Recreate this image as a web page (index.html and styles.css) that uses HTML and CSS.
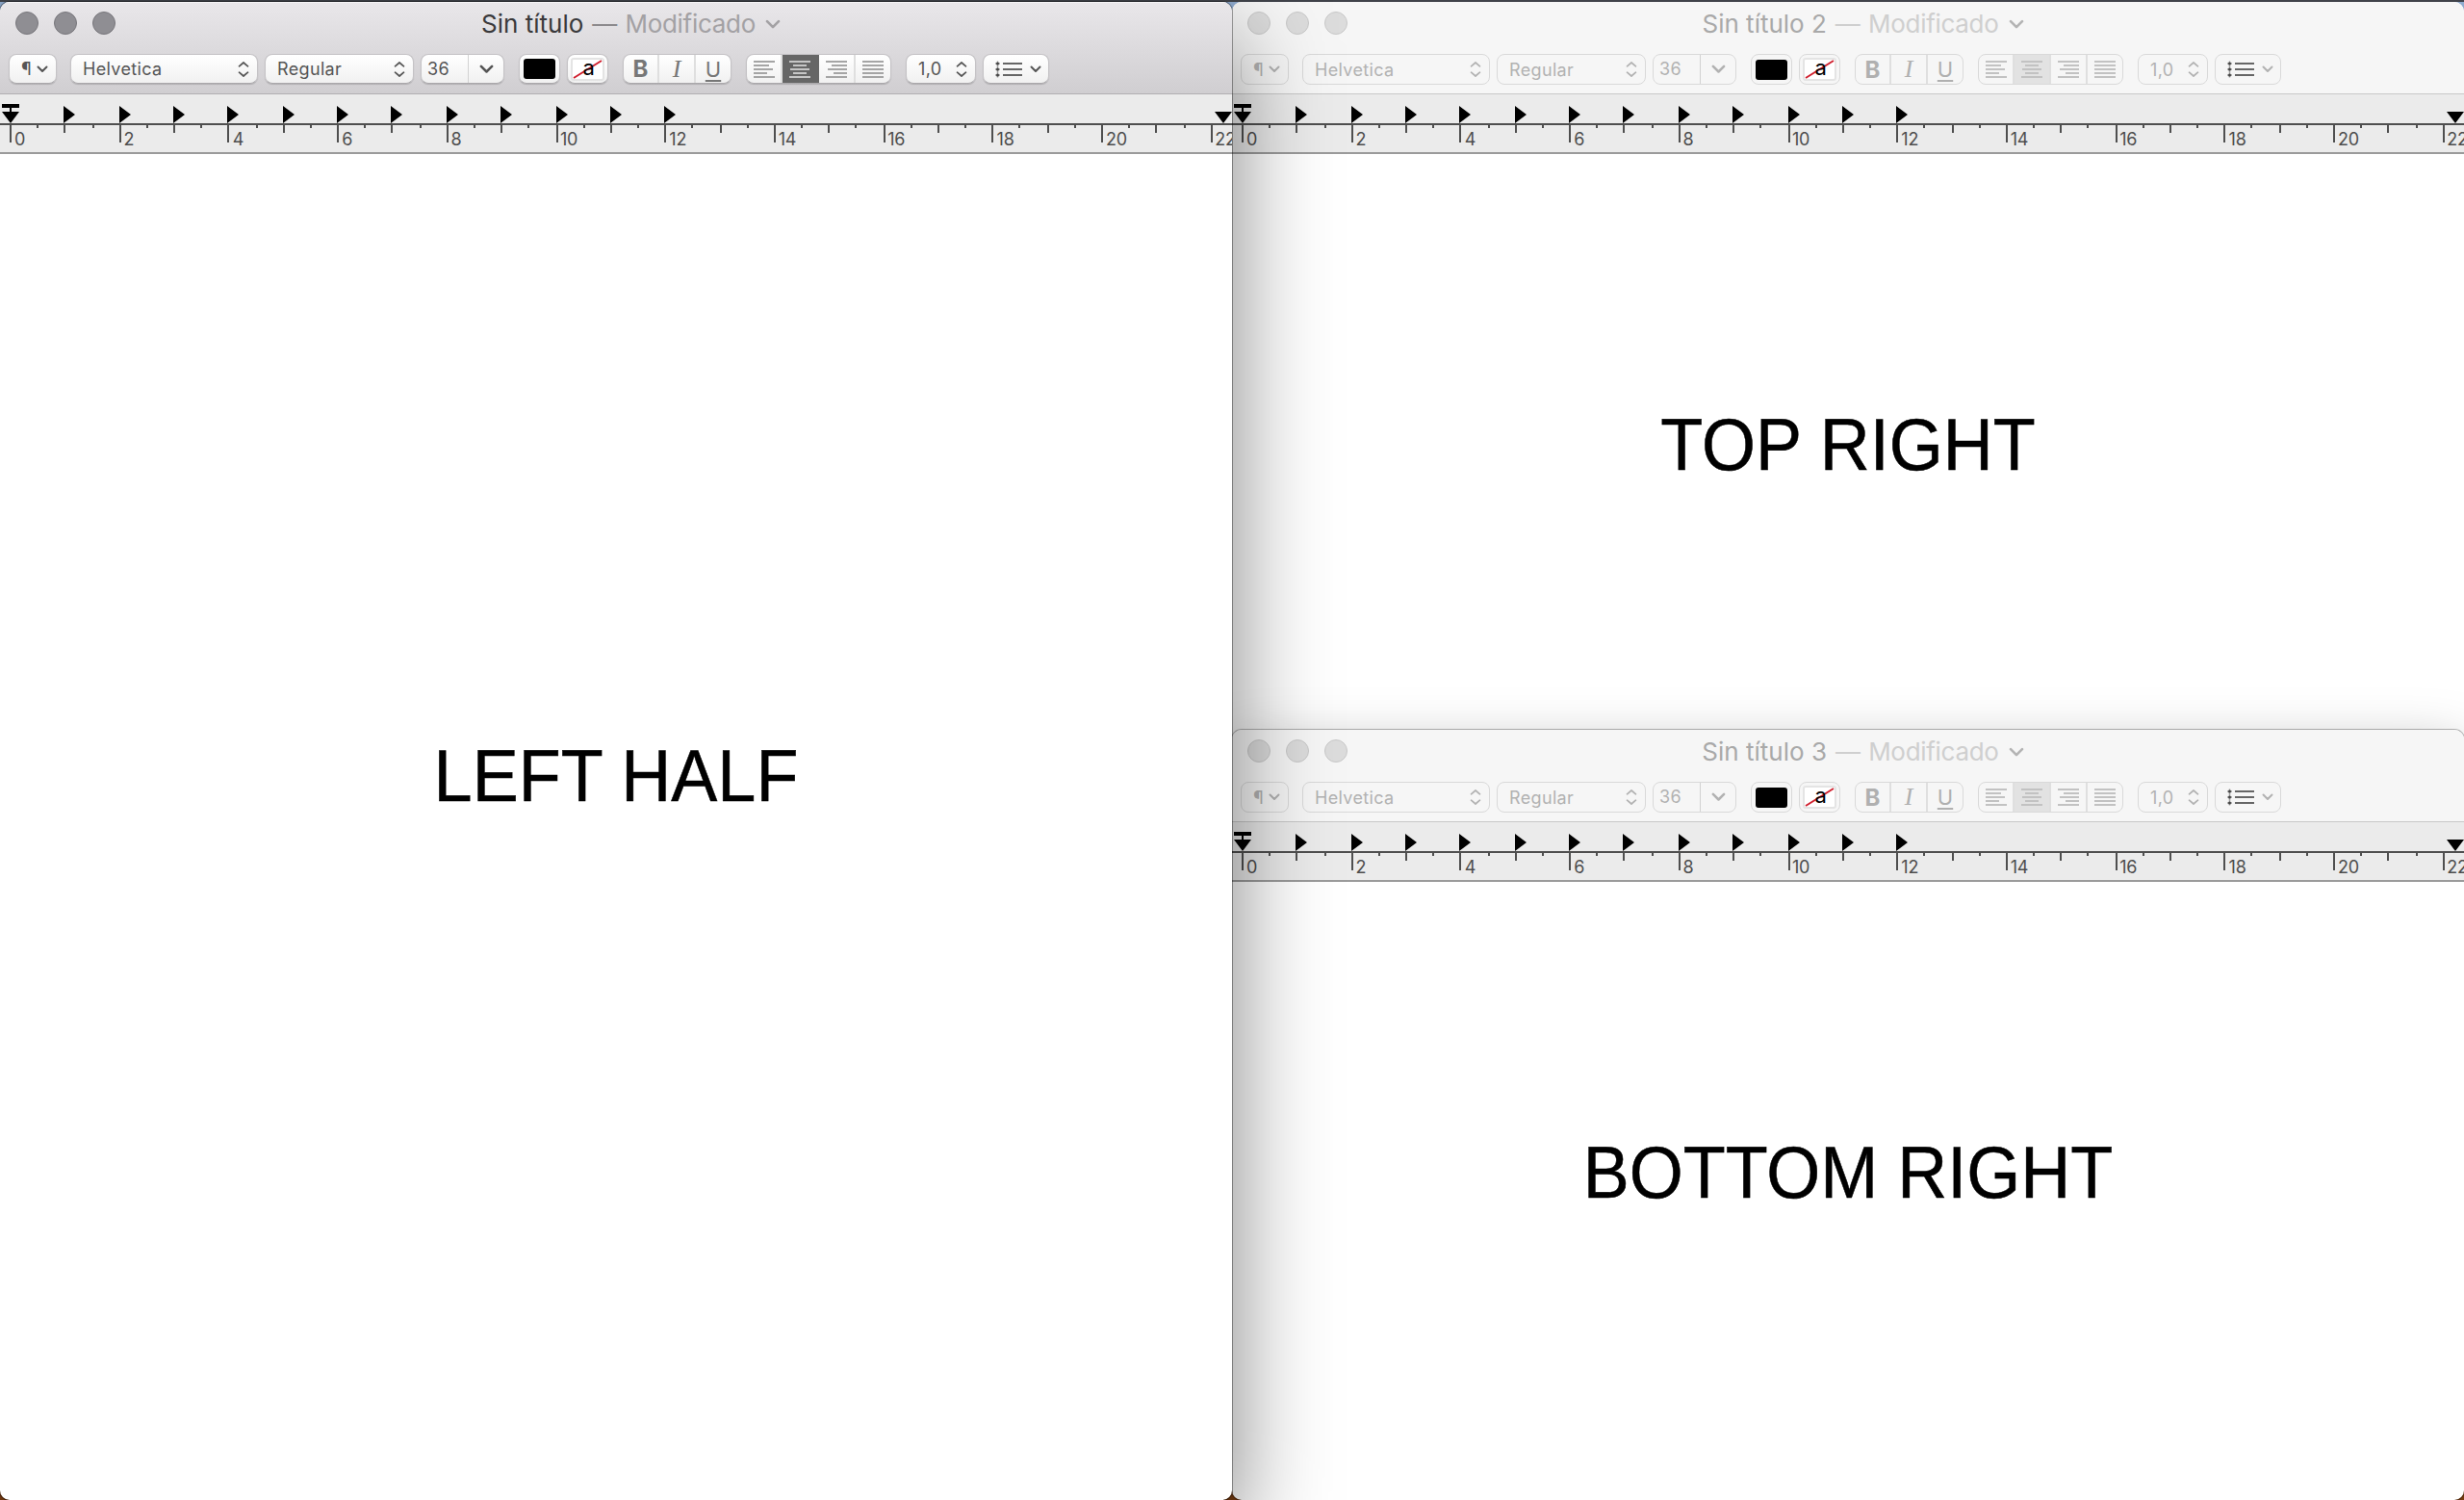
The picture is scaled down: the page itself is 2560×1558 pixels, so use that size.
FILE: index.html
```
<!DOCTYPE html>
<html lang="es">
<head>
<meta charset="utf-8">
<title>Sin título</title>
<link rel="stylesheet" href="styles.css">
</head>
<body>
<svg class="defs" width="0" height="0" aria-hidden="true">
  <symbol id="down" viewBox="0 0 12 8"><path d="M1.5 1.5 6 6l4.500-4.500" fill="none" stroke="currentColor" stroke-width="2" stroke-linecap="round" stroke-linejoin="round"/></symbol>
  <symbol id="updown" viewBox="0 0 12 18"><path d="M1.500 5.800 6 2l4.500 3.800M1.500 12.200 6 16l4.500-3.800" fill="none" stroke="currentColor" stroke-width="1.700" stroke-linecap="round" stroke-linejoin="round"/></symbol>
  <symbol id="left" viewBox="0 0 22 18"><path d="M0 1h22M0 5h16M0 9h20M0 13h14M0 17h22" stroke="currentColor" stroke-width="2"/></symbol>
  <symbol id="center" viewBox="0 0 22 18"><path d="M0 1h22M4 5h14M1 9h20M4 13h14M0 17h22" stroke="currentColor" stroke-width="2"/></symbol>
  <symbol id="right" viewBox="0 0 22 18"><path d="M0 1h22M6 5h16M2 9h20M8 13h14M0 17h22" stroke="currentColor" stroke-width="2"/></symbol>
  <symbol id="full" viewBox="0 0 22 18"><path d="M0 1h22M0 5h22M0 9h22M0 13h22M0 17h22" stroke="currentColor" stroke-width="2"/></symbol>
  <symbol id="list" viewBox="0 0 28 18"><path d="M8 3h20M8 9h20M8 15h20" stroke="currentColor" stroke-width="2"/><path d="M0 3h5M0 9h5M0 15h5M2.500 .5v17" stroke="currentColor" stroke-width="1.500" opacity=".6"/><circle cx="2.500" cy="3" r="1.500"/><circle cx="2.500" cy="9" r="1.500"/><circle cx="2.500" cy="15" r="1.500"/></symbol>
</svg>
<main id="desktop"></main>
<script src="windows.js"></script>
</body>
</html>
```
FILE: styles.css
```
* { box-sizing: border-box; }
body { margin: 0; background: #40434a; font-family: Inter, "Liberation Sans", sans-serif; overflow: hidden; }
svg { display: block; flex: none; }
.defs { position: absolute; }
#desktop { display: grid; grid-template-columns: 1280px 1280px; grid-template-rows: 756px 800px; width: 2560px; height: 1558px; padding-top: 2px; overflow: hidden; background: linear-gradient(#40434a 2px, #8fabcf 2px, #7f9dc4 60px, #6a3c18 1500px, #8a4513 1558px); }
.window { display: flex; flex-direction: column; background: #fff; overflow: hidden; border-radius: 10px; position: relative; }
.active { grid-row: 1 / 3; z-index: 3; box-shadow: 0 0 0 1px rgba(0,0,0,.35), 0 40px 100px rgba(0,0,0,.5); }
.top { z-index: 1; height: 780px; }
.bottom { z-index: 2; box-shadow: 0 0 0 1px rgba(0,0,0,.28), 0 22px 60px rgba(0,0,0,.35); }
.head { height: 96px; background: #f6f6f6; border-bottom: 1px solid #c8c8c8; flex: none; }
.active .head { background: linear-gradient(#e9e7ea, #d0ced1); border-color: #b1afb2; box-shadow: inset 0 1px #f5f4f6; }
.titlebar { height: 54px; padding: 10px 16px 0; display: grid; grid-template-columns: 112px 1fr 112px; }
.lights { display: flex; gap: 16px; }
.lights i { width: 24px; height: 24px; border-radius: 50%; background: #dcdcdc; border: 1px solid #c8c8c8; }
.active .lights i { background: #8f8e93; border-color: #77767b; }
.title { display: flex; justify-content: center; align-items: center; height: 26px; padding-left: 31px; font-size: 26px; line-height: 26px; color: #a9a9a9; white-space: pre; }
.title span { color: #cfcfcf; letter-spacing: -.3px; }
.title .dash { margin: 0 1.5px 0 2px; }
.title svg { margin-left: 10px; color: #b4b4b4; }
.active .title { color: #3a393b; }
.active .title span { color: #a3a1a4; }
.active .title .dash { color: #8c8a8d; }
.active .title svg { color: #a3a1a4; }
.tools { display: flex; height: 32px; padding-left: 9px; font-size: 18px; letter-spacing: .35px; color: #b2b2b2; }
.box { height: 32px; border: 1px solid #d9d9d9; border-radius: 8px; display: flex; align-items: center; overflow: hidden; background: #f6f6f6; flex: none; }
.active .box { height: 31px; background: linear-gradient(#fff, #f1f1f1); border-color: #c5c3c6; border-bottom-color: #aaa8ab; box-shadow: 0 1px 1px rgba(0,0,0,.16); }
.active .tools { color: #555; }
.para { width: 50px; padding: 0 8px 0 12px; justify-content: space-between; margin-right: 14px; font-size: 18px; }
.family { width: 195px; padding: 0 8px 0 12px; justify-content: space-between; margin-right: 7px; }
.face { width: 155px; padding: 0 8px 0 12px; justify-content: space-between; margin-right: 7px; }
.size { width: 87px; margin-right: 15px; }
.size b { font-weight: 400; width: 49px; padding-left: 6px; border-right: 1px solid #d2d2d2; line-height: 32px; }
.size svg { margin-left: 11px; }
.ink { width: 43px; margin-right: 7px; justify-content: center; }
.ink i { width: 33px; height: 21px; border-radius: 3px; background: #000; }
.mark { width: 43px; margin-right: 15px; justify-content: center; overflow: visible; }
.mark svg { overflow: visible; }
.mark svg text { font: 22px Inter, sans-serif; letter-spacing: 0; }
.style, .align { margin-right: 15px; }
.style b, .align b { width: 38px; height: 100%; border-right: 2px solid #dfdfdf; display: flex; align-items: center; justify-content: center; font-weight: 400; font-size: 24px; letter-spacing: 0; color: #b0b0b0; }
.style b:first-child, .align b:first-child { width: 37px; }
.style b:last-child, .align b:last-child { border: 0; width: 36px; }
.active .style b { color: #777; }
.style .bold { font-weight: 700; }
.style .italic { font-family: "Liberation Serif", serif; font-style: italic; font-size: 26px; }
.style .under { font-size: 22px; text-decoration: underline; text-decoration-thickness: 2px; text-underline-offset: 3px; }
.align b { color: #c2c2c2; }
.active .align b { color: #a5a5a5; }
.align .on { background: #e2e2e2; }
.active .align .on { background: #666; color: #c6c6c6; border-color: #666; }
.spacing { width: 73px; padding: 0 8px 0 12px; justify-content: space-between; margin-right: 7px; }
.list { width: 69px; padding: 0 7px 0 12px; justify-content: space-between; }
.list svg:first-child { color: #666; fill: #444; }
.ruler { height: 62px; background: #ebebeb; border-bottom: 2px solid #9b9b9b; flex: none; position: relative; }
.ruler > svg { position: absolute; left: 0; top: 0; }
.labels { display: flex; padding: 38px 0 0 15px; font-size: 18px; line-height: 18px; color: #4d4d4d; letter-spacing: -.2px; }
.labels span { width: 113.4px; flex: none; }
.page { flex: 1; display: flex; justify-content: center; align-items: flex-start; font: 72px/84px "Liberation Sans", Arial, sans-serif; color: #000; }
/* Slightly taller capitals and firmer stems, keeping the baseline */
.page p { margin: 0; transform: scaleY(1.05); transform-origin: 0 67px; -webkit-text-stroke: .5px #000; }
.active .page { padding-top: 605px; }
.top .page, .bottom .page { padding-top: 261px; }
```
FILE: windows.js
```
const icon = (id, w, h) => `<svg width="${w}" height="${h}"><use href="#${id}"/></svg>`;

// One centimetre is 28.35 points, snapped to whole points (two pixels each).
const at = n => 10 + 2 * Math.round(n * 28.35 + 0.001);

function ruler() {
  let ticks = '', tabs = '', labels = '';
  for (let h = 0; h <= 44; h++) {
    const len = h % 4 === 0 ? 18 : h % 2 === 0 ? 8 : 3;
    ticks += `M${at(h / 2) + 1} 32v${len}`;
  }
  for (let n = 1; n <= 12; n++) tabs += `M${at(n)} 12l12 9-12 9z`;
  for (let n = 0; n <= 22; n += 2) labels += `<span>${n}</span>`;
  return `<div class="ruler"><svg width="1280" height="60">
    <path d="M0 31h1280${ticks}" stroke="#4f4f4f" stroke-width="2"/>
    <path d="${tabs}M2 10h18v4H12v4h8l-9 12-9-12h8v-4H2zM1262 18h18l-9 12z"/></svg>
    <div class="labels">${labels}</div></div>`;
}

function win(kind, title, text) {
  return `<section class="window ${kind}"><header class="head">
  <div class="titlebar"><div class="lights"><i></i><i></i><i></i></div>
  <div class="title">${title}<span class="dash"> — </span><span>Modificado</span>${icon('down', 16, 11)}</div></div>
  <div class="tools">
    <div class="box para">¶${icon('down', 12, 8)}</div>
    <div class="box family">Helvetica${icon('updown', 12, 18)}</div>
    <div class="box face">Regular${icon('updown', 12, 18)}</div>
    <div class="box size"><b>36</b>${icon('down', 15, 10)}</div>
    <div class="box ink"><i></i></div>
    <div class="box mark"><svg width="35" height="24"><rect x="1" y="1" width="33" height="22" rx="2" fill="#fff" stroke="#e4e4e4" stroke-width="2"/><path d="M3 21 32 3" stroke="#d0202f" stroke-width="2"/><text x="12.500" y="18">a</text></svg></div>
    <div class="box style"><b class="bold">B</b><b class="italic">I</b><b class="under">U</b></div>
    <div class="box align"><b>${icon('left', 22, 18)}</b><b class="on">${icon('center', 22, 18)}</b><b>${icon('right', 22, 18)}</b><b>${icon('full', 22, 18)}</b></div>
    <div class="box spacing">1,0${icon('updown', 12, 18)}</div>
    <div class="box list">${icon('list', 28, 18)}${icon('down', 12, 8)}</div>
  </div></header>${ruler()}<div class="page"><p>${text}</p></div></section>`;
}

document.getElementById('desktop').innerHTML =
  win('active', 'Sin título', 'LEFT HALF') +
  win('top', 'Sin título 2', 'TOP RIGHT') +
  win('bottom', 'Sin título 3', 'BOTTOM RIGHT');
```
